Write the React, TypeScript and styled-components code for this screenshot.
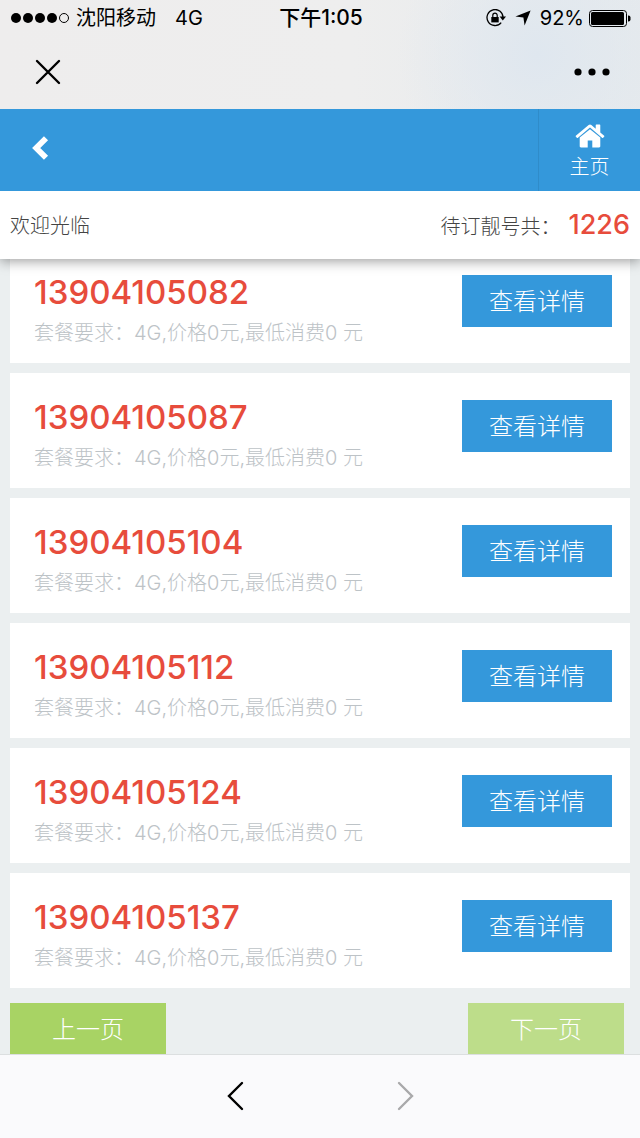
import React from "react";
import styled, { createGlobalStyle } from "styled-components";

const GlobalStyle = createGlobalStyle`
  * { box-sizing: border-box; }
  body {
    margin: 0;
    background: #ebeff0;
    font-family: Inter, "Noto Sans CJK SC", sans-serif;
    font-size: 20px;
    line-height: 30px;
    font-weight: 300;
    color: #444;
  }
  button {
    border: 0;
    padding: 0;
    margin: 0;
    background: none;
    color: inherit;
    font: inherit;
    cursor: pointer;
  }
  svg { display: block; }
`;

const Page = styled.div`
  display: flex;
  flex-direction: column;
  min-height: 100vh;
`;

const Chrome = styled.div`
  background:
    radial-gradient(circle at 84% 50%, #dfe7ef 0, rgba(223, 231, 239, 0) 140px),
    linear-gradient(90deg, #eeeded 0, #eeeeee 55%, #e6eaed 100%);
  color: #000;
`;

const StatusBar = styled.div`
  display: grid;
  grid-template-columns: 1fr auto 1fr;
  align-items: center;
  height: 36px;
  padding: 0 9px 0 11px;
  font-weight: 400;
`;

const StatusGroup = styled.div<{ $end?: boolean }>`
  display: flex;
  align-items: center;
  justify-content: ${(p) => (p.$end ? "flex-end" : "flex-start")};
  gap: ${(p) => (p.$end ? "9px" : "7px")};
`;

const Charge = styled.div`
  display: flex;
  align-items: center;
  gap: 5px;
`;

const Network = styled.span`
  margin-left: 12px;
`;

const Clock = styled.time`
  font-size: 21px;
  font-weight: 500;
`;

const TitleBar = styled.div`
  display: flex;
  align-items: center;
  justify-content: space-between;
  height: 73px;
  padding: 0 30px 2px 34px;
`;

const Header = styled.header`
  position: relative;
  z-index: 2;
  display: flex;
  justify-content: space-between;
  height: 82px;
  background: #3498db;
  color: #fff;
`;

const BackButton = styled.button`
  width: 80px;
  padding: 0 0 4px 30px;
`;

const HomeLink = styled.a`
  display: flex;
  flex-direction: column;
  align-items: center;
  gap: 1px;
  width: 102px;
  padding-top: 12px;
  border-left: 1px solid #2f8cca;
  color: #fff;
  text-decoration: none;
`;

const InfoBar = styled.section`
  position: relative;
  z-index: 1;
  display: flex;
  align-items: center;
  justify-content: space-between;
  height: 68px;
  padding: 2px 10px 0;
  background: #fff;
  box-shadow: 0 2px 12px rgba(0, 0, 0, 0.4);
`;

const Total = styled.div`
  display: flex;
  align-items: baseline;
  gap: 8px;
`;

const TotalValue = styled.strong`
  font-size: 27px;
  font-weight: 500;
  color: #e74c3c;
`;

const Main = styled.main`
  flex: 1;
  margin-top: -11px;
  padding: 0 10px;
`;

const NumberList = styled.ul`
  display: flex;
  flex-direction: column;
  gap: 10px;
  margin: 0;
  padding: 0;
  list-style: none;
`;

const Card = styled.li`
  display: flex;
  align-items: flex-start;
  justify-content: space-between;
  height: 115px;
  padding: 27px 18px 0 24px;
  background: #fff;
`;

const PhoneNumber = styled.h2`
  margin: 0;
  font-size: 33px;
  line-height: 34px;
  font-weight: 500;
  color: #e74c3c;
`;

const Terms = styled.p`
  margin: 9px 0 0;
  line-height: 30px;
  color: #bdc3c7;
`;

const DetailButton = styled.button`
  width: 150px;
  height: 52px;
  padding-top: 2px;
  background: #3498db;
  color: #fff;
  font-size: 24px;
`;

const Pager = styled.nav`
  display: flex;
  justify-content: space-between;
  margin-top: 15px;
  padding-right: 6px;
`;

const PageButton = styled.button`
  width: 156px;
  height: 51px;
  padding-top: 2px;
  background: #a8d364;
  color: #fff;
  font-size: 24px;

  &:disabled {
    background: #bddd8a;
    cursor: default;
  }
`;

const BottomBar = styled.footer`
  display: flex;
  align-items: center;
  justify-content: center;
  gap: 120px;
  height: 84px;
  padding-bottom: 2px;
  border-top: 1px solid #dcdfe0;
  background: #fafafc;
`;

const ToolButton = styled.button`
  display: grid;
  place-items: center;
  width: 49px;
  height: 48px;
  color: #000;

  &:disabled { color: #a9a9ab; }
`;

const SignalDots = () => (
  <svg width="58" height="12" viewBox="0 0 58 12" aria-label="信号">
    {[5, 17, 29, 41].map((x) => (
      <circle key={x} cx={x} cy="6" r="5" />
    ))}
    <circle cx="53" cy="6" r="4.5" fill="none" stroke="#000" />
  </svg>
);

const RotationLock = () => (
  <svg width="20" height="18" viewBox="0 0 20 18" fill="none" stroke="#000">
    <path d="M15.2 13.6A8 8 0 1 1 17 9" strokeWidth="1.3" />
    <path d="M13.6 7.6H20l-3.2 4z" fill="#000" stroke="none" />
    <rect x="5.3" y="8" width="7.4" height="5.4" fill="#000" stroke="none" />
    <path d="M6.8 8.2V6.3a2.2 2.2 0 0 1 4.4 0v1.9" strokeWidth="1.2" />
  </svg>
);

const LocationArrow = () => (
  <svg width="16" height="16" viewBox="0 0 16 16">
    <path d="M15.6.4 9.6 15.6 8.4 7.6.4 6.4z" />
  </svg>
);

const Battery = () => (
  <svg width="42" height="17" viewBox="0 0 42 17">
    <rect x=".5" y=".5" width="37" height="16" rx="3" fill="none" stroke="#000" />
    <rect x="2" y="2" width="33" height="13" rx="1.5" />
    <path d="M39 5.5h.5a2 2 0 0 1 2 2v2a2 2 0 0 1-2 2H39z" />
  </svg>
);

const CloseIcon = () => (
  <svg width="28" height="28" viewBox="0 0 28 28" stroke="#000" strokeWidth="2.4" strokeLinecap="round">
    <path d="M3 3l22 22M25 3L3 25" />
  </svg>
);

const MoreIcon = () => (
  <svg width="36" height="8" viewBox="0 0 36 8">
    <circle cx="4" cy="4" r="3.6" />
    <circle cx="18" cy="4" r="3.6" />
    <circle cx="32" cy="4" r="3.6" />
  </svg>
);

const BackIcon = () => (
  <svg width="20" height="26" viewBox="0 0 20 26" fill="none" stroke="#fff" strokeWidth="5.8">
    <path d="M16 3.2L6.2 13l9.8 9.8" />
  </svg>
);

const HomeIcon = () => (
  <svg width="32" height="30" viewBox="-64 56 1792 1680" fill="#fff">
    <path d="M1408 992v480q0 26-19 45t-45 19H960v-384H704v384H320q-26 0-45-19t-19-45V992q0-1 .5-3t.5-3l575-474 575 474q1 2 1 6zm223-69l-62 74q-8 9-21 11h-3q-13 0-21-7L832 424 140 1001q-12 8-24 7-13-2-21-11l-62-74q-8-10-7-23.500t11-21.500l719-599q32-26 76-26t76 26l244 204V288q0-14 9-23t23-9h192q14 0 23 9t9 23v408l219 182q10 8 11 21.500t-7 23.500z" />
  </svg>
);

const Arrow = ({ forward }: { forward?: boolean }) => (
  <svg width="18" height="30" viewBox="0 0 18 30" fill="none" stroke="currentColor" strokeWidth="2.4" strokeLinecap="round">
    <path d={forward ? "M3 2l13 13L3 28" : "M15 2L2 15l13 13"} />
  </svg>
);

const numbers = [
  "13904105082",
  "13904105087",
  "13904105104",
  "13904105112",
  "13904105124",
  "13904105137",
];

export default function App() {
  return (
    <Page>
      <GlobalStyle />
      <Chrome>
        <StatusBar>
          <StatusGroup>
            <SignalDots />
            <span>沈阳移动</span>
            <Network>4G</Network>
          </StatusGroup>
          <Clock>下午1:05</Clock>
          <StatusGroup $end>
            <RotationLock />
            <LocationArrow />
            <Charge>
              <span>92%</span>
              <Battery />
            </Charge>
          </StatusGroup>
        </StatusBar>
        <TitleBar>
          <button aria-label="关闭"><CloseIcon /></button>
          <button aria-label="更多"><MoreIcon /></button>
        </TitleBar>
      </Chrome>
      <Header>
        <BackButton aria-label="返回"><BackIcon /></BackButton>
        <HomeLink href="#">
          <HomeIcon />
          主页
        </HomeLink>
      </Header>
      <InfoBar>
        <span>欢迎光临</span>
        <Total>
          待订靓号共：<TotalValue>1226</TotalValue>
        </Total>
      </InfoBar>
      <Main>
        <NumberList>
          {numbers.map((number) => (
            <Card key={number}>
              <div>
                <PhoneNumber>{number}</PhoneNumber>
                <Terms>套餐要求：4G,价格0元,最低消费0 元</Terms>
              </div>
              <DetailButton>查看详情</DetailButton>
            </Card>
          ))}
        </NumberList>
        <Pager>
          <PageButton>上一页</PageButton>
          <PageButton disabled>下一页</PageButton>
        </Pager>
      </Main>
      <BottomBar>
        <ToolButton aria-label="后退"><Arrow /></ToolButton>
        <ToolButton aria-label="前进" disabled><Arrow forward /></ToolButton>
      </BottomBar>
    </Page>
  );
}
